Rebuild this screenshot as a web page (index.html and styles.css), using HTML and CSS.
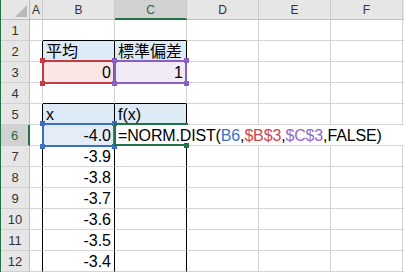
FILE: index.html
```html
<!DOCTYPE html>
<html lang="ja">
<head>
  <meta charset="UTF-8">
  <title>NORM.DIST</title>
  <link rel="stylesheet" href="styles.css">
</head>
<body>
  <div class="sheet">
    <!-- column headers -->
    <div class="corner">
      <svg width="12" height="12" viewBox="0 0 12 12"><polygon points="12,0 12,12 0,12" fill="#b8b8b8"/></svg>
    </div>
    <div class="col-head">A</div>
    <div class="col-head">B</div>
    <div class="col-head sel">C</div>
    <div class="col-head">D</div>
    <div class="col-head">E</div>
    <div class="col-head">F</div>
    <div class="col-head last"></div>

    <!-- row 1 -->
    <div class="row-head">1</div>
    <div class="cell"></div>
    <div class="cell edge-b"></div>
    <div class="cell edge-b"></div>
    <div class="cell"></div>
    <div class="cell"></div>
    <div class="cell"></div>
    <div class="cell last"></div>

    <!-- row 2 -->
    <div class="row-head">2</div>
    <div class="cell edge-r"></div>
    <div class="cell title edge-r edge-b"><span class="ja">平均</span></div>
    <div class="cell title edge-r edge-b"><span class="ja">標準偏差</span></div>
    <div class="cell"></div>
    <div class="cell"></div>
    <div class="cell"></div>
    <div class="cell last"></div>

    <!-- row 3 -->
    <div class="row-head">3</div>
    <div class="cell edge-r"></div>
    <div class="cell num edge-r edge-b ref-cell tint-red">0<span class="ref ref-red"><i class="h tl"></i><i class="h tr"></i><i class="h bl"></i><i class="h br"></i></span></div>
    <div class="cell num edge-r edge-b ref-cell tint-purple">1<span class="ref ref-purple"><i class="h tl"></i><i class="h tr"></i><i class="h bl"></i><i class="h br"></i></span></div>
    <div class="cell"></div>
    <div class="cell"></div>
    <div class="cell"></div>
    <div class="cell last"></div>

    <!-- row 4 -->
    <div class="row-head">4</div>
    <div class="cell"></div>
    <div class="cell edge-b"></div>
    <div class="cell edge-b"></div>
    <div class="cell"></div>
    <div class="cell"></div>
    <div class="cell"></div>
    <div class="cell last"></div>

    <!-- row 5 -->
    <div class="row-head">5</div>
    <div class="cell edge-r"></div>
    <div class="cell title edge-r edge-b">x</div>
    <div class="cell title edge-r edge-b">f(x)</div>
    <div class="cell"></div>
    <div class="cell"></div>
    <div class="cell"></div>
    <div class="cell last"></div>

    <!-- row 6: C6 is being edited -->
    <div class="row-head sel">6</div>
    <div class="cell edge-r"></div>
    <div class="cell num edge-r ref-cell tint-blue">-4.0<span class="ref ref-blue"><i class="h tl"></i><i class="h tr"></i><i class="h bl"></i><i class="h br"></i></span></div>
    <div class="cell active">=NORM.DIST(<span class="f-blue">B6</span>,<span class="f-red">$B$3</span>,<span class="f-purple">$C$3</span>,FALSE)<span class="active-frame"></span><i class="fill-handle"></i></div>
    <div class="cell under-edit"></div>
    <div class="cell under-edit"></div>
    <div class="cell under-edit"></div>
    <div class="cell last"></div>

    <!-- rows 7-12 -->
    <div class="row-head">7</div>
    <div class="cell edge-r"></div>
    <div class="cell num edge-r">-3.9</div>
    <div class="cell edge-r"></div>
    <div class="cell"></div>
    <div class="cell"></div>
    <div class="cell"></div>
    <div class="cell last"></div>

    <div class="row-head">8</div>
    <div class="cell edge-r"></div>
    <div class="cell num edge-r">-3.8</div>
    <div class="cell edge-r"></div>
    <div class="cell"></div>
    <div class="cell"></div>
    <div class="cell"></div>
    <div class="cell last"></div>

    <div class="row-head">9</div>
    <div class="cell edge-r"></div>
    <div class="cell num edge-r">-3.7</div>
    <div class="cell edge-r"></div>
    <div class="cell"></div>
    <div class="cell"></div>
    <div class="cell"></div>
    <div class="cell last"></div>

    <div class="row-head">10</div>
    <div class="cell edge-r"></div>
    <div class="cell num edge-r">-3.6</div>
    <div class="cell edge-r"></div>
    <div class="cell"></div>
    <div class="cell"></div>
    <div class="cell"></div>
    <div class="cell last"></div>

    <div class="row-head">11</div>
    <div class="cell edge-r"></div>
    <div class="cell num edge-r">-3.5</div>
    <div class="cell edge-r"></div>
    <div class="cell"></div>
    <div class="cell"></div>
    <div class="cell"></div>
    <div class="cell last"></div>

    <div class="row-head">12</div>
    <div class="cell edge-r"></div>
    <div class="cell num edge-r">-3.4</div>
    <div class="cell edge-r"></div>
    <div class="cell"></div>
    <div class="cell"></div>
    <div class="cell"></div>
    <div class="cell last"></div>
  </div>
</body>
</html>
```

FILE: styles.css
```css
* {
  box-sizing: border-box;
}

body {
  margin: 0;
  background-color: #fff;
  font-family: "Liberation Sans", Arial, "Noto Sans CJK JP", sans-serif;
  overflow: hidden;
}

.sheet {
  display: grid;
  grid-template-columns: 29px 13px repeat(5, 72px) 1fr;
  grid-template-rows: 20px repeat(12, 21px);
  width: 404px;
  height: 272px;
  border-left: 1px solid #217346;
}

/* headers */
.corner {
  display: flex;
  justify-content: flex-end;
  align-items: flex-end;
  padding: 0 2px 2px 0;
  background-color: #e6e6e6;
  border-right: 1px solid #bdbdbd;
  border-bottom: 1px solid #bdbdbd;
}

.corner svg {
  display: block;
}

.col-head {
  background-color: #e6e6e6;
  border-right: 1px solid #c9c9c9;
  border-bottom: 1px solid #bdbdbd;
  color: #333;
  font-size: 12px;
  line-height: 17px;
  padding-top: 2px;
  text-align: center;
}

.col-head.sel {
  background-color: #d2d2d2;
  color: #1d6b40;
  border-bottom: 2px solid #217346;
}

.row-head {
  background-color: #e6e6e6;
  border-right: 1px solid #bdbdbd;
  border-bottom: 1px solid #d0d0d0;
  color: #333;
  font-size: 13px;
  line-height: 18px;
  padding-top: 2px;
  text-align: center;
}

.row-head.sel {
  background-color: #d2d2d2;
  color: #1d6b40;
  border-right: 2px solid #217346;
}

/* cells */
.cell {
  border-right: 1px solid #d4d4d4;
  border-bottom: 1px solid #d4d4d4;
  color: #000;
  font-size: 16px;
  line-height: 18px;
  padding: 2px 3px 0;
  white-space: nowrap;
}

.cell.last,
.col-head.last {
  border-right: none;
}

.edge-r {
  border-right-color: #000;
}

.edge-b {
  border-bottom-color: #000;
}

.title {
  background-color: #ddebf7;
}

.num {
  text-align: right;
}

.ja {
  font-size: 16px;
}

/* formula reference highlights */
.ref-cell {
  position: relative;
}

.tint-red {
  background-color: #fbe5e5;
}

.tint-purple {
  background-color: #f0ebf7;
}

.tint-blue {
  background-color: #e4ecf8;
}

.ref {
  position: absolute;
  top: -2px;
  left: -1px;
  right: -1px;
  bottom: -2px;
  border: 2px solid;
}

.ref-red {
  color: #c43c41;
}

.ref-purple {
  color: #8a5fbe;
}

.ref-blue {
  color: #3b6fc4;
}

.h {
  position: absolute;
  width: 5px;
  height: 5px;
  background-color: currentColor;
}

.h.tl { left: -4px; top: -4px; }
.h.tr { right: -4px; top: -4px; }
.h.bl { left: -4px; bottom: -4px; }
.h.br { right: -4px; bottom: -4px; }

/* cell in edit mode */
.active {
  position: relative;
  border-right-color: transparent;
  overflow: visible;
  letter-spacing: -0.15px;
}

.under-edit {
  border-right-color: transparent;
}

.active-frame {
  position: absolute;
  top: -2px;
  left: -1px;
  right: -2px;
  bottom: -1px;
  border: 2px solid #217346;
  border-right: none;
}

.fill-handle {
  position: absolute;
  right: -3px;
  bottom: -3px;
  width: 5px;
  height: 5px;
  background-color: #217346;
}

.f-blue {
  color: #3f70c5;
}

.f-red {
  color: #d0454b;
}

.f-purple {
  color: #9467c8;
}
```
